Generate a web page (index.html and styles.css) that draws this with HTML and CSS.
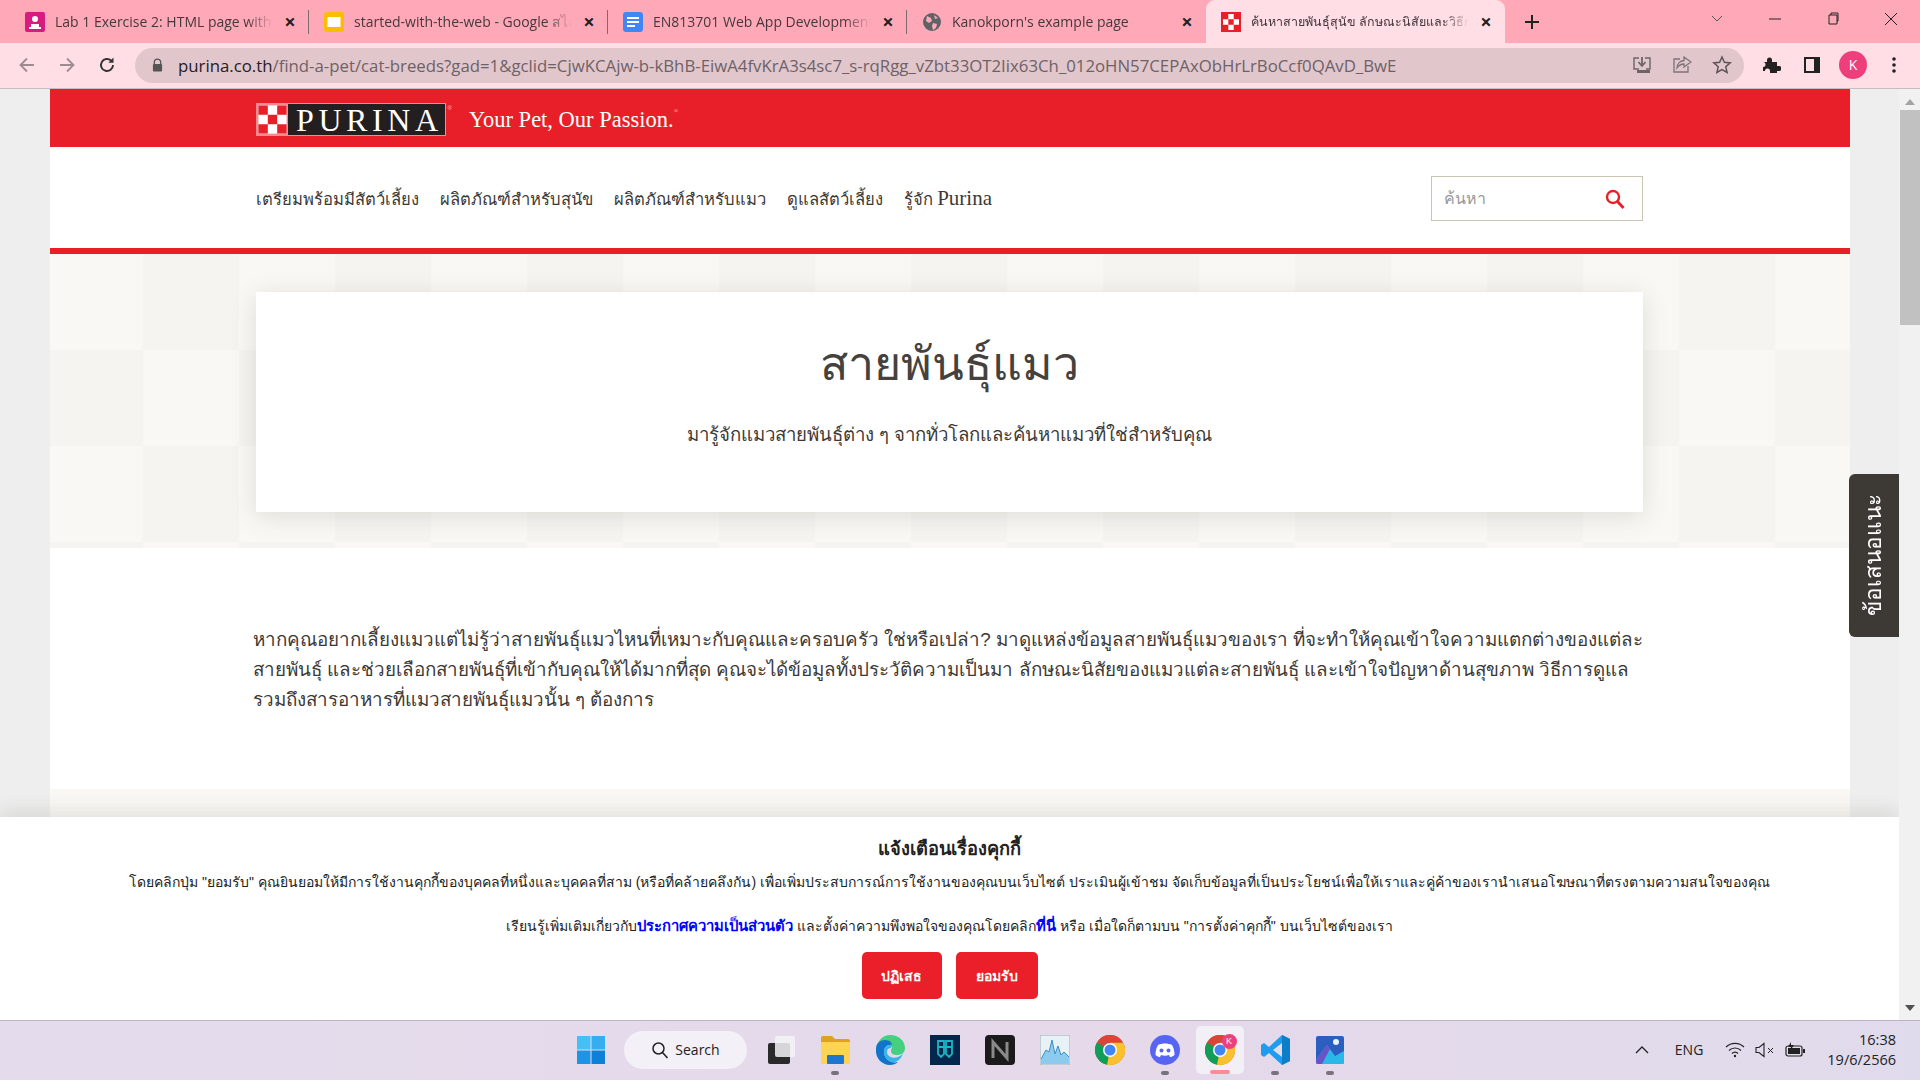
FILE: index.html
```html
<!DOCTYPE html>
<html lang="th">
  <head>
    <meta charset="utf-8">
    <title>สายพันธุ์แมว</title>
    <link rel="stylesheet" href="styles.css">
  </head>
  <body>
    <!-- Browser tabs -->
    <div class="tabstrip">
      <div class="tab sep">
        <svg class="favicon" viewBox="0 0 20 20"><rect x="0" y="0" width="20" height="20" rx="2" fill="#d81b7f"/><circle cx="10" cy="7" r="3" fill="#fff"/><path d="M4 15h12v2H4zM6 12h8v3H6z" fill="#fff"/></svg>
        <span class="tab-title">Lab 1 Exercise 2: HTML page with CSS</span>
        <span class="tab-close">×</span>
      </div>
      <div class="tab sep">
        <svg class="favicon" viewBox="0 0 20 20"><rect width="20" height="20" rx="3" fill="#fbbc04"/><rect x="3.5" y="5" width="13" height="10" fill="#fff"/></svg>
        <span class="tab-title">started-with-the-web - Google สไลด์</span>
        <span class="tab-close">×</span>
      </div>
      <div class="tab sep">
        <svg class="favicon" viewBox="0 0 20 20"><rect width="20" height="20" rx="3" fill="#4285f4"/><path d="M4 5h12v2H4zM4 9h12v2H4zM4 13h8v2H4z" fill="#fff"/></svg>
        <span class="tab-title">EN813701 Web App Development</span>
        <span class="tab-close">×</span>
      </div>
      <div class="tab">
        <svg class="favicon" viewBox="0 0 20 20"><circle cx="10" cy="10" r="9" fill="#5f6368"/><path d="M5 4l4 2 1 3-3 2-3-2zM11 11l4 1-1 4-3 2-1-4zM12 3l4 3-3 1z" fill="#ffa9b8"/></svg>
        <span class="tab-title">Kanokporn's example page</span>
        <span class="tab-close">×</span>
      </div>
      <div class="tab active">
        <svg class="favicon" viewBox="0 0 20 20"><rect width="20" height="20" fill="#e81f28"/><path d="M2 2h16v16H2z" fill="#fff"/><path d="M2 2h5.3v5.3H2zM12.7 2H18v5.3h-5.3zM7.3 7.3h5.4v5.4H7.3zM2 12.7h5.3V18H2zM12.7 12.7H18V18h-5.3z" fill="#e81f28"/></svg>
        <span class="tab-title small">ค้นหาสายพันธุ์สุนัข ลักษณะนิสัยและวิธีการดูแล</span>
        <span class="tab-close">×</span>
      </div>
      <svg class="newtab" viewBox="0 0 16 16"><path d="M8 1v14M1 8h14" stroke="#222" stroke-width="2"/></svg>
      <div class="window-btns">
        <svg viewBox="0 0 14 14"><path d="M2 4l5 5 5-5" fill="none" stroke="#555"/></svg>
        <svg viewBox="0 0 14 14"><path d="M1 7h12" stroke="#222"/></svg>
        <svg viewBox="0 0 14 14"><path d="M3 3h8v9H3zM5 3V1h7v8h-1" fill="none" stroke="#222"/></svg>
        <svg viewBox="0 0 14 14"><path d="M1 1l12 12M13 1L1 13" stroke="#222"/></svg>
      </div>
    </div>

    <!-- Address bar -->
    <div class="toolbar">
      <svg class="nav-ico" viewBox="0 0 20 20"><path d="M17 10H4M10 3.5L3.5 10l6.5 6.5" fill="none" stroke="#9c8c91" stroke-width="1.8"/></svg>
      <svg class="nav-ico" viewBox="0 0 20 20"><path d="M3 10h13M10 3.5l6.5 6.5-6.5 6.5" fill="none" stroke="#9c8c91" stroke-width="1.8"/></svg>
      <svg class="nav-ico" viewBox="0 0 20 20"><path d="M16 10a6 6 0 1 1-1.8-4.3" fill="none" stroke="#333" stroke-width="1.9"/><path d="M16.5 2.5v5.2h-5.2z" fill="#333"/></svg>
      <div class="omnibox">
        <svg class="lock" viewBox="0 0 12 14"><path d="M2.5 6V4a3.5 3.5 0 0 1 7 0v2" fill="none" stroke="#555" stroke-width="1.4"/><rect x="1" y="6" width="10" height="8" rx="1" fill="#555"/></svg>
        <span class="url"><span class="host">purina.co.th</span>/find-a-pet/cat-breeds?gad=1&amp;gclid=CjwKCAjw-b-kBhB-EiwA4fvKrA3s4sc7_s-rqRgg_vZbt33OT2Iix63Ch_012oHN57CEPAxObHrLrBoCcf0QAvD_BwE</span>
        <div class="omni-icons">
          <svg viewBox="0 0 20 20"><path d="M7 3H2v11h5M13 3h5v11h-4" fill="none" stroke="#6c6467" stroke-width="1.4"/><path d="M10 2v8M6.5 7l3.5 4 3.5-4" fill="none" stroke="#6c6467" stroke-width="1.8"/><path d="M5 15h13v3H5z" fill="#6c6467"/></svg>
          <svg viewBox="0 0 20 20"><path d="M8 4H2v13h14v-6" fill="none" stroke="#7d7478" stroke-width="1.3"/><path d="M12 2l7 5-7 5V9c-3 0-5 1-7 4 0-4 3-7 7-7.5z" fill="none" stroke="#7d7478" stroke-width="1.3"/></svg>
          <svg viewBox="0 0 20 20"><path d="M10 2l2.4 5.3 5.8.6-4.4 3.9 1.3 5.7-5.1-3-5.1 3 1.3-5.7L1.8 7.9l5.8-.6z" fill="none" stroke="#5c5457" stroke-width="1.5"/></svg>
        </div>
      </div>
      <div class="toolbar-icons">
        <svg viewBox="0 0 20 20"><path d="M2 7h4V5a2.5 2.5 0 0 1 5 0v2h5v4h2a2.5 2.5 0 0 1 0 5h-2v2H9v-2a2.5 2.5 0 0 0-5 0H2v-4a2.5 2.5 0 0 0 0-5z" fill="#222"/></svg>
        <svg viewBox="0 0 20 20"><path d="M2 2h16v16H2z" fill="#222"/><path d="M4 4h8v12H4z" fill="#ffdfe5"/></svg>
        <span class="avatar">K</span>
        <svg viewBox="0 0 20 20"><circle cx="10" cy="4" r="1.8" fill="#222"/><circle cx="10" cy="10" r="1.8" fill="#222"/><circle cx="10" cy="16" r="1.8" fill="#222"/></svg>
      </div>
    </div>

    <div class="viewport">
      <div class="page">
        <div class="site">
          <header class="brandbar">
            <div class="logo">
              <svg class="logo-check" viewBox="0 0 33 33"><rect width="33" height="33" fill="#f58a8f"/><rect x="1.5" y="1.5" width="30" height="30" fill="#fff"/><path d="M1.5 1.5h10v10h-10zM21.5 1.5h10v10h-10zM11.5 11.5h10v10h-10zM1.5 21.5h10v10h-10zM21.5 21.5h10v10h-10z" fill="#e81f28"/></svg>
              <span class="logo-word">PURINA</span>
              <span class="reg logo-reg">®</span>
            </div>
            <span class="tagline">Your Pet, Our Passion.<span class="reg">®</span></span>
          </header>

          <nav class="mainnav">
            <ul class="nav-links">
              <li>เตรียมพร้อมมีสัตว์เลี้ยง</li>
              <li>ผลิตภัณฑ์สำหรับสุนัข</li>
              <li>ผลิตภัณฑ์สำหรับแมว</li>
              <li>ดูแลสัตว์เลี้ยง</li>
              <li>รู้จัก <span class="nav-latin">Purina</span></li>
            </ul>
            <div class="searchbox">
              <input class="search-input" type="text" placeholder="ค้นหา">
              <svg class="search-ico" viewBox="0 0 20 20"><circle cx="8" cy="8" r="6" fill="none" stroke="#e81f28" stroke-width="2.4"/><path d="M12.5 12.5l6 6.5" stroke="#e81f28" stroke-width="2.8"/></svg>
            </div>
          </nav>

          <section class="hero">
            <div class="hero-card">
              <h1>สายพันธุ์แมว</h1>
              <p>มารู้จักแมวสายพันธุ์ต่าง ๆ จากทั่วโลกและค้นหาแมวที่ใช่สำหรับคุณ</p>
            </div>
          </section>

          <section class="intro">
            <p>หากคุณอยากเลี้ยงแมวแต่ไม่รู้ว่าสายพันธุ์แมวไหนที่เหมาะกับคุณและครอบครัว ใช่หรือเปล่า? มาดูแหล่งข้อมูลสายพันธุ์แมวของเรา ที่จะทำให้คุณเข้าใจความแตกต่างของแต่ละ สายพันธุ์ และช่วยเลือกสายพันธุ์ที่เข้ากับคุณให้ได้มากที่สุด คุณจะได้ข้อมูลทั้งประวัติความเป็นมา ลักษณะนิสัยของแมวแต่ละสายพันธุ์ และเข้าใจปัญหาด้านสุขภาพ วิธีการดูแล รวมถึงสารอาหารที่แมวสายพันธุ์แมวนั้น ๆ ต้องการ</p>
          </section>

          <section class="next-band"></section>
        </div>

        <div class="feedback"><span>ข้อเสนอแนะ</span></div>

        <div class="cookie">
          <h4>แจ้งเตือนเรื่องคุกกี้</h4>
          <p>โดยคลิกปุ่ม "ยอมรับ" คุณยินยอมให้มีการใช้งานคุกกี้ของบุคคลที่หนึ่งและบุคคลที่สาม (หรือที่คล้ายคลึงกัน) เพื่อเพิ่มประสบการณ์การใช้งานของคุณบนเว็บไซต์ ประเมินผู้เข้าชม จัดเก็บข้อมูลที่เป็นประโยชน์เพื่อให้เราและคู่ค้าของเรานำเสนอโฆษณาที่ตรงตามความสนใจของคุณ</p>
          <p>เรียนรู้เพิ่มเติมเกี่ยวกับ<a href="#">ประกาศความเป็นส่วนตัว</a> และตั้งค่าความพึงพอใจของคุณโดยคลิก<a href="#">ที่นี่</a> หรือ เมื่อใดก็ตามบน "การตั้งค่าคุกกี้" บนเว็บไซต์ของเรา</p>
          <div class="cookie-btns">
            <button class="btn btn-no">ปฏิเสธ</button>
            <button class="btn btn-yes">ยอมรับ</button>
          </div>
        </div>
      </div>

      <div class="scrollbar">
        <svg class="sb-arrow" viewBox="0 0 10 6"><path d="M5 0l5 6H0z" fill="#a3a3a3"/></svg>
        <div class="sb-thumb"></div>
        <svg class="sb-arrow bottom" viewBox="0 0 10 6"><path d="M0 0h10L5 6z" fill="#505050"/></svg>
      </div>
    </div>

    <!-- Windows taskbar -->
    <div class="taskbar">
      <div class="tb-item">
        <svg viewBox="0 0 30 30"><path d="M1 1h13.5v13.5H1z" fill="#45c0f5"/><path d="M15.5 1H29v13.5H15.5z" fill="#35aeef"/><path d="M1 15.5h13.5V29H1z" fill="#1e95e4"/><path d="M15.5 15.5H29V29H15.5z" fill="#0f80d8"/></svg>
      </div>
      <div class="tb-search">
        <svg viewBox="0 0 18 18"><circle cx="7.5" cy="7.5" r="5.5" fill="none" stroke="#222" stroke-width="1.5"/><path d="M11.5 11.5l5 5.5" stroke="#222" stroke-width="1.6"/></svg>
        <span>Search</span>
      </div>
      <div class="tb-item gap">
        <svg viewBox="0 0 30 30"><rect x="3" y="8" width="22" height="21" rx="2" fill="#2a2a2a"/><rect x="10" y="1" width="20" height="21" rx="2" fill="#f5f3f7" opacity=".85"/></svg>
      </div>
      <div class="tb-item running">
        <svg viewBox="0 0 30 30"><path d="M1 3a2 2 0 0 1 2-2h9l3 3h13a2 2 0 0 1 2 2v4H1z" fill="#e0a020"/><rect x="1" y="7" width="29" height="22" rx="1" fill="#ffd452"/><rect x="7" y="20" width="17" height="9" rx="1" fill="#1a78d0"/></svg>
      </div>
      <div class="tb-item">
        <svg viewBox="0 0 30 30"><path d="M15 0c9 0 15 6 15 13 0 5-4 7-8 7-3 0-6-1-6-4 0-2 1-3 1-4 0-1-3-4-7-4S2 11 1 14C2 6 8 0 15 0z" fill="#44d07f"/><path d="M1 14C1 8 6 5 10 5c5 0 7 3 7 5-4-1-8 2-8 7 0 6 6 12 14 10-2 2-5 3-8 3C7 30 0 23 1 14z" fill="#1173c9"/><path d="M9 17c0-5 4-8 8-7 0 1-1 2-1 3-3 0-4 2-4 4 0 4 5 7 11 5 2-1 4-2 5-4-1 4-4 8-8 9-6 1-11-4-11-10z" fill="#35b5ec"/></svg>
      </div>
      <div class="tb-item">
        <svg viewBox="0 0 30 30"><rect width="30" height="30" fill="#04264a"/><path d="M8 6h6v13l-3 3-3-3zM16 6h6v13l-3 3-3-3zM8 12h14" fill="none" stroke="#19b6c8" stroke-width="1.8"/></svg>
      </div>
      <div class="tb-item">
        <svg viewBox="0 0 30 30"><rect width="30" height="30" rx="4" fill="#1b1b1b"/><path d="M8 23V7l14 16V7" fill="none" stroke="#8a8a8a" stroke-width="3"/></svg>
      </div>
      <div class="tb-item">
        <svg viewBox="0 0 30 30"><rect width="30" height="30" fill="#e8f1f6" stroke="#9aa9b2"/><path d="M1 24l5-9 3 2 3-12 3 14 3-8 3 9 3-3 5 5v7H1z" fill="#8ccbee"/><path d="M1 24l5-9 3 2 3-12 3 14 3-8 3 9 3-3 5 5" fill="none" stroke="#3c8fc4"/></svg>
      </div>
      <div class="tb-item">
        <svg viewBox="0 0 30 30"><use href="#chrome-mark"/></svg>
      </div>
      <div class="tb-item running">
        <svg viewBox="0 0 30 30"><circle cx="15" cy="15" r="15" fill="#5865f2"/><path d="M8 10c4-2 10-2 14 0 2 3 2.5 7 2.5 10-2 1.5-3 2-4.5 2l-1-2c-3 1-5 1-8 0l-1 2c-1.5 0-2.5-.5-4.5-2 0-3 .5-7 2.5-10z" fill="#fff"/><circle cx="11.5" cy="15.5" r="2" fill="#5865f2"/><circle cx="18.5" cy="15.5" r="2" fill="#5865f2"/></svg>
      </div>
      <div class="tb-item active">
        <div class="tb-tile">
          <svg viewBox="0 0 30 30">
            <defs>
              <g id="chrome-mark">
                <circle cx="15" cy="15" r="15" fill="#db4437"/>
                <path d="M15 15L2 7.5A15 15 0 0 0 15 30l7.5-13z" fill="#0f9d58"/>
                <path d="M15 15l-3 15h3a15 15 0 0 0 13-22.5H15z" fill="#fbc02d"/>
                <path d="M2 7.5A15 15 0 0 1 28 7.5H15z" fill="#db4437"/>
                <circle cx="15" cy="15" r="7" fill="#fff"/>
                <circle cx="15" cy="15" r="5.5" fill="#4285f4"/>
              </g>
            </defs>
            <use href="#chrome-mark"/>
          </svg>
          <span class="tb-badge">K</span>
        </div>
      </div>
      <div class="tb-item running">
        <svg viewBox="0 0 30 30"><path d="M22 0l8 4v22l-8 4L9 18l-5 4-3-2v-10l3-2 5 4z" fill="#1f9cf0"/><path d="M22 0l8 4v22l-8 4z" fill="#0b7dc9"/><path d="M22 8v14l-9-7z" fill="#e3dbea"/></svg>
      </div>
      <div class="tb-item running">
        <svg viewBox="0 0 30 30"><path d="M3 1h24a2 2 0 0 1 2 2v24a2 2 0 0 1-2 2H3a2 2 0 0 1-2-2V3a2 2 0 0 1 2-2z" fill="#2c5ec0"/><circle cx="21" cy="7" r="3" fill="#e8f4ff"/><path d="M1 25l11-15 8 11 9-5v11a2 2 0 0 1-2 2H3a2 2 0 0 1-2-2z" fill="#29b8e8"/><path d="M1 25l11-15 3 4-8 15H3a2 2 0 0 1-2-2z" fill="#6a52c8"/></svg>
      </div>

      <div class="tray">
        <svg class="tray-up" viewBox="0 0 14 8"><path d="M1 7l6-6 6 6" fill="none" stroke="#222" stroke-width="1.3"/></svg>
        <span class="tray-lang">ENG</span>
        <svg class="tray-ico" viewBox="0 0 20 16"><path d="M1 5a13 13 0 0 1 18 0M4 8.5a8.5 8.5 0 0 1 12 0M7 11.5a4 4 0 0 1 6 0" fill="none" stroke="#222" stroke-width="1.2"/><circle cx="10" cy="14" r="1.2" fill="#222"/></svg>
        <svg class="tray-ico" viewBox="0 0 20 16"><path d="M1 5.5h3l5-4v13l-5-4H1z" fill="none" stroke="#222" stroke-width="1.1"/><path d="M13 6l5 5M18 6l-5 5" stroke="#222"/></svg>
        <svg class="tray-ico" viewBox="0 0 20 16"><rect x="1" y="4" width="16" height="10" rx="2" fill="none" stroke="#222" stroke-width="1.2"/><rect x="3" y="6" width="12" height="6" fill="#222"/><path d="M18 7h2v4h-2z" fill="#222"/><path d="M6 0L3 5h3l-1 4 4-6H6z" fill="#222"/></svg>
        <div class="clock"><span>16:38</span><span>19/6/2566</span></div>
      </div>
    </div>
  </body>
</html>
```

FILE: styles.css
```css
* {
  box-sizing: border-box;
}

html,
body {
  margin: 0;
  height: 100%;
  overflow: hidden;
}

body {
  display: flex;
  flex-direction: column;
  font-family: "Liberation Sans", "Noto Sans", sans-serif;
  color: #3d3935;
}

/* Browser tabs */
.tabstrip {
  height: 43px;
  display: flex;
  align-items: stretch;
  padding-left: 10px;
  background: #ffa9b8;
}

.tab {
  width: 299px;
  display: flex;
  align-items: center;
  gap: 10px;
  padding: 0 12px 0 15px;
  font-family: "Open Sans", sans-serif;
  font-size: 14px;
  color: #45383c;
}

.tab.sep {
  background: linear-gradient(#7d6a6f, #7d6a6f) right center / 1px 24px no-repeat;
}

.tab.active {
  background: #ffdfe5;
  border-radius: 9px 9px 0 0;
}

.favicon {
  width: 20px;
  height: 20px;
  flex: none;
}

.tab-title {
  flex: 1;
  overflow: hidden;
  white-space: nowrap;
  -webkit-mask-image: linear-gradient(to right, #000 88%, transparent);
  mask-image: linear-gradient(to right, #000 88%, transparent);
}

.tab-title.small {
  font-size: 12.5px;
}

.tab-close {
  width: 14px;
  flex: none;
  font-size: 20px;
  font-weight: 700;
  line-height: 20px;
  text-align: center;
  color: #222;
}

.newtab {
  width: 16px;
  height: 16px;
  margin: 14px 0 0 19px;
}

.window-btns {
  margin-left: auto;
  display: flex;
  gap: 44px;
  padding: 12px 22px 0 0;
}

.window-btns svg {
  width: 14px;
  height: 14px;
}

/* Address bar */
.toolbar {
  height: 46px;
  display: flex;
  align-items: center;
  padding: 0 0 1px 17px;
  background: #ffdfe5;
  border-bottom: 1px solid #c8bcc0;
}

.nav-ico {
  width: 20px;
  height: 20px;
  margin-right: 20px;
}

.omnibox {
  width: 1609px;
  height: 35px;
  margin-left: -2px;
  display: flex;
  align-items: center;
  padding: 0 12px 0 17px;
  background: #e1c6cc;
  border-radius: 18px;
}

.lock {
  width: 11px;
  height: 14px;
  margin-right: 15px;
}

.url {
  flex: 1;
  font-family: "Open Sans", sans-serif;
  font-size: 16.8px;
  color: #6d6266;
  white-space: nowrap;
  overflow: hidden;
}

.host {
  color: #25201f;
}

.omni-icons {
  display: flex;
  gap: 20px;
}

.omni-icons svg {
  width: 20px;
  height: 20px;
}

.toolbar-icons {
  display: flex;
  align-items: center;
  gap: 21px;
  margin-left: 17px;
}

.toolbar-icons svg {
  width: 20px;
  height: 20px;
}

.avatar {
  width: 28px;
  height: 28px;
  margin: 0 -4px;
  border-radius: 50%;
  background: #ee3f7c;
  color: #fff;
  font-family: "Open Sans", sans-serif;
  font-size: 14px;
  line-height: 28px;
  text-align: center;
}

/* Page area */
.viewport {
  flex: 1;
  min-height: 0;
  display: flex;
}

.page {
  position: relative;
  flex: 1;
  padding: 0 49px 0 50px;
  overflow: hidden;
  background: #eee;
}

.site {
  height: 100%;
  background: #fff;
}

.brandbar {
  height: 58px;
  display: flex;
  align-items: center;
  gap: 23px;
  padding: 0 206px;
  background: #e81f28;
}

.logo {
  position: relative;
  width: 190px;
  height: 33px;
  margin-top: 3px;
  display: flex;
  background: #231f20;
  border: 1px solid #f58a8f;
}

.logo-check {
  width: 31px;
  height: 31px;
  flex: none;
}

.logo-word {
  flex: 1;
  padding-left: 8px;
  font-family: "Liberation Serif", serif;
  font-size: 32px;
  line-height: 33px;
  letter-spacing: 4.6px;
  color: #fff;
}

.reg {
  font-size: 6px;
  vertical-align: 14px;
  color: #f9c0c3;
}

.logo-reg {
  position: absolute;
  top: 0;
  right: -7px;
  line-height: 8px;
  vertical-align: baseline;
}

.tagline {
  margin-top: 3px;
  font-family: "Liberation Serif", serif;
  font-size: 22.5px;
  color: #fff;
}

.mainnav {
  height: 107px;
  display: flex;
  align-items: center;
  justify-content: space-between;
  padding: 2px 207px 0 206px;
  border-bottom: 6px solid #e81f28;
}

.nav-links {
  display: flex;
  gap: 21px;
  margin: 0;
  padding: 0;
  list-style: none;
  font-family: "Liberation Serif", serif;
  font-size: 16.6px;
}

.nav-latin {
  font-size: 21px;
}

.searchbox {
  width: 212px;
  height: 45px;
  display: flex;
  align-items: center;
  padding: 0 17px 0 12px;
  border: 1px solid #c8c5b4;
}

.search-input {
  flex: 1;
  width: 100px;
  border: 0;
  outline: 0;
  padding: 0;
  font-family: "Liberation Serif", serif;
  font-size: 16px;
}

.search-input::placeholder {
  color: #999;
}

.search-ico {
  width: 20px;
  height: 20px;
}

.hero {
  padding: 38px 207px 36px 206px;
  background: conic-gradient(#f5f4f0 25%, #f9f8f4 0 50%, #f5f4f0 0 75%, #f9f8f4 0) -3px 0 / 192px 192px;
}

.hero-card {
  height: 220px;
  padding-top: 40px;
  text-align: center;
  background: #fff;
  box-shadow: 0 4px 24px rgba(90, 80, 70, 0.16);
}

.hero-card h1 {
  margin: 0;
  font-size: 46.5px;
  font-weight: 400;
  line-height: 64px;
  color: #45413d;
}

.hero-card p {
  margin: 24px 0 0;
  font-size: 18.6px;
  line-height: 30px;
}

.intro {
  height: 241px;
  padding: 77px 200px 0 203px;
}

.intro p {
  margin: 0;
  font-size: 18.8px;
  line-height: 30px;
}

.next-band {
  height: 60px;
  background: #f9f8f4;
}

.feedback {
  position: absolute;
  top: 385px;
  right: 0;
  width: 50px;
  height: 163px;
  display: flex;
  align-items: center;
  justify-content: center;
  background: #3d3935;
  color: #fff;
  font-size: 22.5px;
  writing-mode: vertical-rl;
  transform: rotate(180deg);
  border-radius: 0 6px 6px 0;
}

.cookie {
  position: absolute;
  left: 0;
  right: 0;
  bottom: 0;
  height: 203px;
  padding-top: 20px;
  text-align: center;
  background: #fff;
  box-shadow: 0 -8px 16px rgba(60, 55, 50, 0.1);
  color: #222;
}

.cookie h4 {
  margin: 0;
  font-size: 18.3px;
  line-height: 23px;
}

.cookie p {
  margin: 11px 0 0;
  font-size: 14px;
  line-height: 22px;
}

.cookie p + p {
  margin-top: 22px;
}

.cookie a {
  color: #00f;
  font-size: 14.8px;
  font-weight: 700;
  text-decoration: none;
}

.cookie-btns {
  display: flex;
  justify-content: center;
  gap: 14px;
  margin-top: 15px;
}

.btn {
  height: 47px;
  border: 0;
  border-radius: 5px;
  background: #ea1f2a;
  color: #fff;
  font-family: inherit;
  font-size: 14px;
  font-weight: 700;
}

.btn-no {
  width: 80px;
}

.btn-yes {
  width: 82px;
}

/* Scrollbar */
.scrollbar {
  position: relative;
  width: 21px;
  background: #f1f1f1;
}

.sb-arrow {
  position: absolute;
  top: 10px;
  left: 6px;
  width: 10px;
  height: 6px;
}

.sb-arrow.bottom {
  top: auto;
  bottom: 9px;
}

.sb-thumb {
  margin: 21px 0 0 1px;
  height: 215px;
  background: #c1c1c1;
}

/* Windows taskbar */
.taskbar {
  height: 60px;
  display: flex;
  align-items: center;
  padding: 0 24px 2px 563px;
  background: linear-gradient(90deg, #e4dcec, #e5d9ea 60%, #e0dbec);
  border-top: 1px solid #b9b3c3;
}

.tb-item {
  position: relative;
  width: 55px;
  height: 100%;
  display: flex;
  align-items: center;
  justify-content: center;
}

.tb-item svg {
  width: 30px;
  height: 30px;
}

.tb-item.gap {
  margin-left: 5px;
}

.tb-item.running::after {
  content: "";
  position: absolute;
  left: 24px;
  bottom: 3px;
  width: 8px;
  height: 4px;
  border-radius: 2px;
  background: #77727c;
}

.tb-tile {
  position: relative;
  width: 48px;
  height: 48px;
  display: flex;
  align-items: center;
  justify-content: center;
  background: #f3eff6;
  border-radius: 5px;
}

.tb-badge {
  position: absolute;
  top: 8px;
  right: 7px;
  width: 15px;
  height: 15px;
  border-radius: 50%;
  background: #ee3f7c;
  color: #fff;
  font-size: 9px;
  line-height: 15px;
  text-align: center;
}

.tb-item.active::after {
  content: "";
  position: absolute;
  left: 18px;
  bottom: 4px;
  width: 20px;
  height: 4px;
  border-radius: 2px;
  background: #ff8a9a;
}

.tb-search {
  width: 123px;
  height: 38px;
  margin-left: 6px;
  display: flex;
  align-items: center;
  justify-content: center;
  gap: 6px;
  background: #f4f0f7;
  border-radius: 19px;
  font-family: "Open Sans", sans-serif;
  font-size: 14px;
  color: #222;
}

.tb-search svg {
  width: 18px;
  height: 18px;
}

.tray {
  margin-left: auto;
  display: flex;
  align-items: center;
  font-family: "Open Sans", sans-serif;
  font-size: 14px;
  color: #222;
}

.tray-up {
  width: 14px;
  height: 8px;
  margin-right: 26px;
}

.tray-lang {
  margin-right: 22px;
}

.tray-ico {
  width: 20px;
  height: 16px;
  margin-right: 10px;
}

.clock {
  display: flex;
  flex-direction: column;
  align-items: flex-end;
  margin-left: 12px;
  font-size: 14.5px;
  line-height: 20px;
}
```
